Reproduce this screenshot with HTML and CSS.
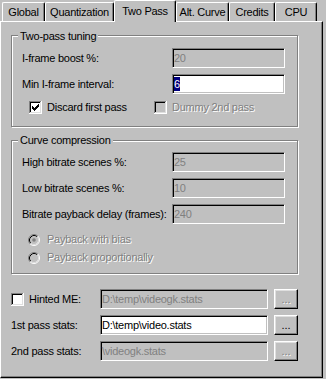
FILE: index.html
```
<!DOCTYPE html>
<html>
<head>
<meta charset="utf-8">
<link rel="stylesheet" href="styles.css">
</head>
<body>
<div class="dialog">
  <div class="tabs">
    <div class="tab tab-global">Global</div>
    <div class="tab tab-quant">Quantization</div>
    <div class="tab tab-active tab-two">Two Pass</div>
    <div class="tab tab-alt">Alt. Curve</div>
    <div class="tab tab-credits">Credits</div>
    <div class="tab tab-cpu">CPU</div>
  </div>
  <div class="panel">
    <div class="group group-tuning">
      <div class="group-title">Two-pass tuning</div>
      <div class="row">
        <span class="label">I-frame boost %:</span>
        <span class="edit disabled">20</span>
      </div>
      <div class="row">
        <span class="label">Min I-frame interval:</span>
        <span class="edit"><span class="sel">6</span></span>
      </div>
      <div class="checks">
        <label class="check-item check-first">
          <svg class="box" width="13" height="13" viewBox="0 0 13 13" shape-rendering="crispEdges">
            <path d="M0 0h12v1H0zM0 1h1v11H0z" fill="#808080"/>
            <path d="M1 1h10v1H1zM1 2h1v9H1z" fill="#000"/>
            <path d="M12 0h1v13H0v-1h12z" fill="#fff"/>
            <path d="M11 1h1v11H1v-1h10z" fill="#dfdfdf"/>
            <rect x="2" y="2" width="9" height="9" fill="#fff"/>
            <path d="M3 5h1v3H3zM4 6h1v3H4zM5 7h1v3H5zM6 6h1v3H6zM7 5h1v3H7zM8 4h1v3H8zM9 3h1v3H9z" fill="#000"/>
          </svg>
          <span>Discard first pass</span>
        </label>
        <label class="check-item">
          <svg class="box" width="13" height="13" viewBox="0 0 13 13" shape-rendering="crispEdges">
            <path d="M0 0h12v1H0zM0 1h1v11H0z" fill="#808080"/>
            <path d="M1 1h10v1H1zM1 2h1v9H1z" fill="#000"/>
            <path d="M12 0h1v13H0v-1h12z" fill="#fff"/>
            <path d="M11 1h1v11H1v-1h10z" fill="#dfdfdf"/>
            <rect x="2" y="2" width="9" height="9" fill="#c0c0c0"/>
          </svg>
          <span class="dis-text">Dummy 2nd pass</span>
        </label>
      </div>
    </div>

    <div class="group group-curve">
      <div class="group-title">Curve compression</div>
      <div class="row">
        <span class="label">High bitrate scenes %:</span>
        <span class="edit disabled">25</span>
      </div>
      <div class="row">
        <span class="label">Low bitrate scenes %:</span>
        <span class="edit disabled">10</span>
      </div>
      <div class="row">
        <span class="label">Bitrate payback delay (frames):</span>
        <span class="edit disabled">240</span>
      </div>
      <div class="radios">
        <label class="radio-item">
          <svg class="radio" width="12" height="12" viewBox="0 0 12 12">
            <circle cx="6" cy="6" r="5" fill="#c0c0c0"/>
            <path d="M2.11 9.89A5.5 5.5 0 0 1 9.89 2.11" stroke="#808080" fill="none"/>
            <path d="M9.89 2.11A5.5 5.5 0 0 1 2.11 9.89" stroke="#fff" fill="none"/>
            <path d="M2.82 9.18A4.5 4.5 0 0 1 9.18 2.82" stroke="#000" fill="none"/>
            <path d="M9.18 2.82A4.5 4.5 0 0 1 2.82 9.18" stroke="#dfdfdf" fill="none"/>
            <circle cx="6" cy="6" r="1.8" fill="#808080"/>
          </svg>
          <span class="dis-text">Payback with bias</span>
        </label>
        <label class="radio-item">
          <svg class="radio" width="12" height="12" viewBox="0 0 12 12">
            <circle cx="6" cy="6" r="5" fill="#c0c0c0"/>
            <path d="M2.11 9.89A5.5 5.5 0 0 1 9.89 2.11" stroke="#808080" fill="none"/>
            <path d="M9.89 2.11A5.5 5.5 0 0 1 2.11 9.89" stroke="#fff" fill="none"/>
            <path d="M2.82 9.18A4.5 4.5 0 0 1 9.18 2.82" stroke="#000" fill="none"/>
            <path d="M9.18 2.82A4.5 4.5 0 0 1 2.82 9.18" stroke="#dfdfdf" fill="none"/>
          </svg>
          <span class="dis-text">Payback proportionally</span>
        </label>
      </div>
    </div>

    <div class="files">
      <div class="file-row">
        <label class="file-label">
          <svg class="box" width="13" height="13" viewBox="0 0 13 13" shape-rendering="crispEdges">
            <path d="M0 0h12v1H0zM0 1h1v11H0z" fill="#808080"/>
            <path d="M1 1h10v1H1zM1 2h1v9H1z" fill="#000"/>
            <path d="M12 0h1v13H0v-1h12z" fill="#fff"/>
            <path d="M11 1h1v11H1v-1h10z" fill="#dfdfdf"/>
            <rect x="2" y="2" width="9" height="9" fill="#fff"/>
          </svg>
          <span>Hinted ME:</span>
        </label>
        <span class="edit edit-file disabled">D:\temp\videogk.stats</span>
        <span class="btn disabled">...</span>
      </div>
      <div class="file-row">
        <span class="file-label">1st pass stats:</span>
        <span class="edit edit-file">D:\temp\video.stats</span>
        <span class="btn">...</span>
      </div>
      <div class="file-row">
        <span class="file-label">2nd pass stats:</span>
        <span class="edit edit-file disabled">\videogk.stats</span>
        <span class="btn disabled">...</span>
      </div>
    </div>
  </div>
</div>
</body>
</html>
```
FILE: styles.css
```
html, body {
  margin: 0;
  padding: 0;
  background: #c0c0c0;
}

body {
  font-family: "Liberation Sans", Arial, sans-serif;
  font-size: 11px;
  line-height: 13px;
  letter-spacing: -0.25px;
  color: #000;
}

.dialog {
  width: 326px;
  height: 379px;
  overflow: hidden;
}

/* ---- tabs ---- */
.tabs {
  display: flex;
  align-items: flex-end;
  height: 21px;
  padding-left: 2px;
  box-sizing: border-box;
}

.tab {
  box-sizing: border-box;
  height: 19px;
  padding-top: 3px;
  text-align: center;
  white-space: nowrap;
  border-top: 1px solid #fff;
  border-left: 1px solid #fff;
  border-right: 1px solid #000;
  border-radius: 2px 2px 0 0;
  box-shadow: inset -1px 0 0 #808080;
  background: #c0c0c0;
}

.tab-active {
  height: 22px;
  padding-top: 4px;
  margin-bottom: -1px;
  position: relative;
  z-index: 1;
}

.tab-global { width: 43px; }
.tab-quant { width: 69px; }
.tab-two { width: 62px; }
.tab-alt { width: 53px; }
.tab-credits { width: 46px; }
.tab-cpu { width: 42px; }

/* ---- panel ---- */
.panel {
  box-sizing: border-box;
  width: 323px;
  height: 357px;
  border: 1px solid;
  border-color: #fff #000 #000 #fff;
  box-shadow: inset -1px -1px 0 #808080;
  padding: 13px 24px 16px 10px;
  display: flex;
  flex-direction: column;
}

/* ---- group boxes ---- */
.group {
  display: flex;
  flex-direction: column;
  border: 1px solid #808080;
  box-shadow: inset 1px 1px 0 #fff, 1px 1px 0 #fff;
  padding: 12px 12px 12px 10px;
}

.group-curve {
  margin-top: 13px;
  padding-top: 11px;
  padding-bottom: 9px;
}

.group-title {
  align-self: flex-start;
  margin: -18px 0 5px -4px;
  padding: 0 2px;
  background: #c0c0c0;
  white-space: nowrap;
}

.row {
  display: flex;
  align-items: center;
  height: 20px;
}

.row + .row {
  margin-top: 6px;
}

.label {
  flex: none;
  width: 150px;
  white-space: nowrap;
}

/* ---- edit boxes ---- */
.edit {
  box-sizing: border-box;
  flex: none;
  width: 113px;
  height: 20px;
  border: 1px solid;
  border-color: #808080 #fff #fff #808080;
  box-shadow: inset 1px 1px 0 #000, inset -1px -1px 0 #c0c0c0;
  padding: 0 1px;
  line-height: 18px;
  background: #fff;
  color: #000;
  white-space: nowrap;
  overflow: hidden;
}

.edit.disabled {
  background: #c0c0c0;
  color: #808080;
}

.sel {
  display: inline-block;
  line-height: 14px;
  background: #000080;
  color: #fff;
}

/* ---- checkboxes ---- */
.checks {
  display: flex;
  align-items: center;
  height: 13px;
  margin: 7px 0 0 7px;
}

.check-item {
  display: flex;
  align-items: center;
  gap: 5px;
  white-space: nowrap;
}

.check-first {
  width: 125px;
}

.box, .radio {
  flex: none;
  display: block;
}

.dis-text {
  color: #808080;
  text-shadow: 1px 1px 0 #fff;
}

/* ---- radios ---- */
.radios {
  display: flex;
  flex-direction: column;
  gap: 5px;
  margin: 9px 0 0 6px;
}

.radio-item {
  display: flex;
  align-items: center;
  gap: 7px;
  height: 13px;
  white-space: nowrap;
}

/* ---- file rows ---- */
.files {
  margin-top: 15px;
  display: flex;
  flex-direction: column;
  gap: 6px;
}

.file-row {
  display: flex;
  align-items: center;
  height: 20px;
}

.file-label {
  flex: none;
  width: 89px;
  display: flex;
  align-items: center;
  gap: 5px;
  white-space: nowrap;
}

.edit-file {
  width: 168px;
}

.btn {
  box-sizing: border-box;
  flex: none;
  width: 24px;
  height: 20px;
  margin-left: 6px;
  border: 1px solid;
  border-color: #fff #000 #000 #fff;
  box-shadow: inset -1px -1px 0 #808080, inset 1px 1px 0 #dfdfdf;
  background: #c0c0c0;
  text-align: center;
  line-height: 18px;
  letter-spacing: 0;
  color: #000;
}

.btn.disabled {
  color: #808080;
  text-shadow: 1px 1px 0 #fff;
}
```
